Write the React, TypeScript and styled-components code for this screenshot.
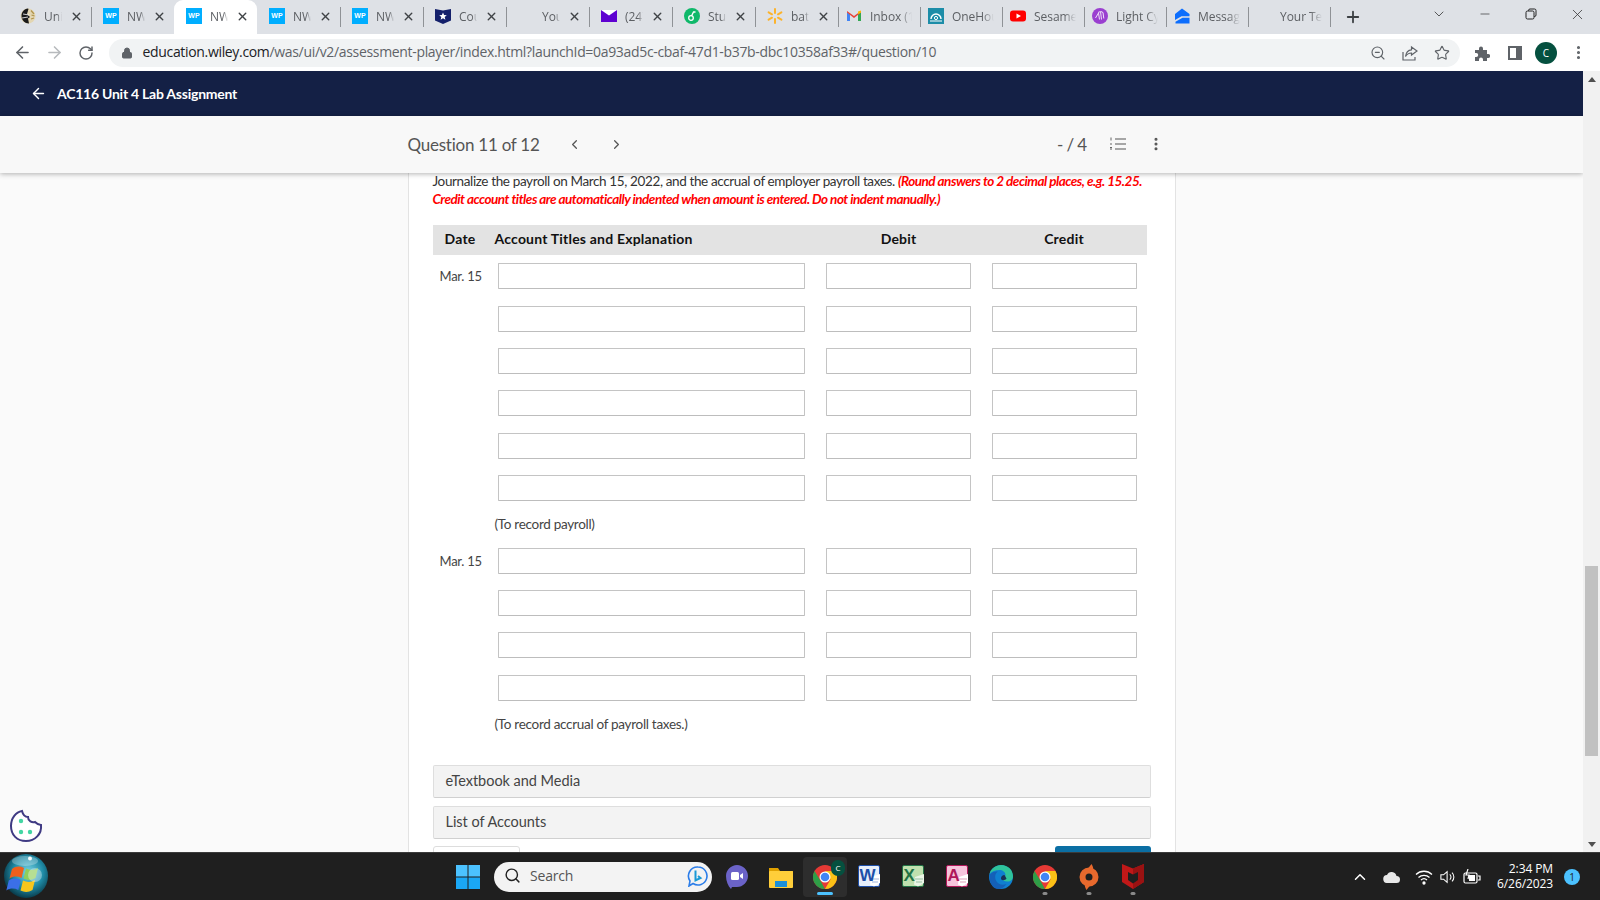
import React from "react";
import styled, { createGlobalStyle } from "styled-components";
import { ArrowLeft, ArrowRight, RotateCw, Lock, ZoomOut, Star, X, Minus, Plus, ChevronDown, ChevronLeft, ChevronRight, EllipsisVertical, ChevronUp, Search } from "lucide-react";

const Global = createGlobalStyle`
  html, body { margin: 0; padding: 0; height: 100%; overflow: hidden; background: #fafafa; }
  * { box-sizing: border-box; }
  #root { width: 1600px; height: 900px; }
`;

const Screen = styled.div`
  width: 1600px; height: 900px; display: flex; flex-direction: column; overflow: hidden; position: relative;
  font-family: Lato, "Open Sans", sans-serif; color: #333;
`;

/* ---------- browser chrome ---------- */
const TabStrip = styled.div`
  height: 34px; flex: none; background: #dee1e6; display: flex; align-items: stretch; padding-left: 8px;
  font-family: "Open Sans", "Noto Sans", sans-serif;
`;
const Tab = styled.div<{ $active?: boolean; $sep?: boolean; $narrow?: boolean }>`
  width: ${(p) => (p.$narrow ? 82 : 83)}px; flex: none; position: relative; display: flex; align-items: center;
  padding: 0 8px 2px ${(p) => (p.$narrow ? 8 : 12)}px; gap: 8px;
  background: ${(p) => (p.$active ? "#fff" : "transparent")};
  border-radius: 9px 9px 0 0;
  &::after {
    content: ""; position: absolute; right: -0.5px; top: 7px; height: 20px; width: 1px;
    background: ${(p) => (p.$sep ? "#8f9296" : "transparent")};
  }
`;
const Fav = styled.span`
  width: 16px; height: 16px; flex: none; display: flex; align-items: center; justify-content: center;
`;
const TabTitle = styled.span`
  flex: 1; min-width: 0; overflow: hidden; white-space: nowrap; font-size: 12px; color: #5c5f63; letter-spacing: -0.05px;
  -webkit-mask-image: linear-gradient(90deg, #000 72%, transparent 100%);
  mask-image: linear-gradient(90deg, #000 72%, transparent 100%);
`;
const TabClose = styled(X)`
  width: 13px; height: 13px; flex: none; color: #3f4246; stroke-width: 2.6;
`;
const WpBadge = styled.span`
  width: 16px; height: 16px; background: #00aeff; color: #fff; font: 700 7px/16px "Liberation Sans", sans-serif; text-align: center;
`;
const NewTab = styled(Plus)`
  width: 18px; height: 18px; color: #3c4043; stroke-width: 2.4; align-self: center; margin-left: 14px; flex: none;
`;
const WindowControls = styled.div`
  margin-left: auto; display: flex; align-items: flex-start; color: #333;
`;
const WinBtn = styled.div<{ $w: number }>`
  width: ${(p) => p.$w}px; height: 28px; display: flex; align-items: center; justify-content: center;
`;

const Toolbar = styled.div`
  height: 37px; flex: none; background: #fff; display: flex; align-items: center; position: relative;
`;
const NavBtn = styled.div<{ $w?: number; $dim?: boolean }>`
  width: ${(p) => p.$w ?? 32}px; height: 28px; flex: none; display: flex; align-items: center; justify-content: center;
  color: ${(p) => (p.$dim ? "#b7babd" : "#5f6368")};
`;
const NavGroup = styled.div`
  display: flex; align-items: center; padding-left: 6px; width: 108.5px; flex: none;
`;
const Omnibox = styled.div`
  width: 1351px; height: 28px; flex: none; border-radius: 14px; background: #f1f3f4; display: flex; align-items: center; padding: 0 2px 0 12px;
`;
const LockIcon = styled(Lock)`
  width: 12px; height: 12px; color: #5f6368; fill: #5f6368; flex: none; margin-right: 10px;
`;
const Url = styled.div`
  flex: 1; font: 14px/18px "Open Sans", sans-serif; letter-spacing: -0.33px; color: #5f6368; white-space: nowrap; padding-bottom: 2px;
  b { font-weight: 400; color: #202124; }
`;
const Avatar = styled.div`
  width: 22px; height: 22px; border-radius: 50%; background: #05503f; color: #fff; font: 10px/22px "Open Sans", sans-serif; text-align: center; flex: none;
`;

/* ---------- page ---------- */
const Viewport = styled.div`
  flex: 1; min-height: 0; display: flex;
`;
const Page = styled.div`
  flex: 1; min-width: 0; display: flex; flex-direction: column; background: #fafafa; overflow: hidden;
`;
const NavyBar = styled.div`
  height: 45px; flex: none; background: #142045; color: #fff; display: flex; align-items: center; padding: 0 0 1px 30px; gap: 10px;
  font-size: 14px; font-weight: 700; letter-spacing: -0.24px;
`;
const QuestionBar = styled.div`
  height: 57px; flex: none; background: #f8f8f8; display: flex; align-items: center; padding: 0 0 1px 407.5px; color: #555;
  box-shadow: 0 1px 5px rgba(0,0,0,.3); position: relative; z-index: 2;
`;
const QuestionLabel = styled.div`
  font-size: 17px; letter-spacing: -0.24px; width: 146px; white-space: nowrap;
`;
const Pager = styled.div`
  width: 42px; display: flex; justify-content: center; color: #555; flex: none;
`;
const Score = styled.div`
  margin-left: 419.5px; font-size: 17px; letter-spacing: -0.6px; width: 52px; white-space: nowrap;
`;
const Kebab = styled.div`
  margin-left: 21px; display: flex; color: #555;
`;

const Sheet = styled.div`
  margin-left: 407.5px; width: 768.5px; flex: 1; min-height: 0; background: #fff;
  border: solid #e3e3e3; border-width: 0 1px; padding: 0 23px 0 24px;
`;
const Instructions = styled.p`
  margin: -1.5px 0 0; font-size: 13.5px; line-height: 18.2px; color: #333; letter-spacing: -0.37px; white-space: nowrap;
  em { color: #f00; font-weight: 700; letter-spacing: -0.5px; }
`;
const TableHead = styled.div`
  margin: 17px 0 8.5px; width: 714px; height: 30px; background: #e3e3e3; display: grid;
  grid-template-columns: 62px 321px 166px 165px; align-items: center; padding-bottom: 2px;
  font-size: 14px; font-weight: 700; color: #111; letter-spacing: 0.2px;
`;
const HeadCell = styled.div<{ $center?: boolean; $pad?: number }>`
  text-align: ${(p) => (p.$center ? "center" : "left")}; padding-left: ${(p) => p.$pad ?? 0}px; white-space: nowrap;
`;
const Rows = styled.div`
  display: flex; flex-direction: column; gap: 16.3px;
`;
const Entry = styled.div`
  display: grid; grid-template-columns: 44px 307px 145px 145px; column-gap: 21px; align-items: center; height: 26px;
`;
const DateCell = styled.div`
  font-size: 13px; padding-left: 7px; white-space: nowrap; letter-spacing: -0.25px; color: #444;
`;
const Field = styled.input`
  width: 100%; height: 26px; border: 1px solid #c4c4c4; border-bottom-color: #bdbdbd; border-radius: 1px; background: #fff; padding: 0; margin: 0; outline: none;
`;
const Note = styled.div<{ $after: number }>`
  padding-left: 62px; font-size: 13.5px; line-height: 18px; letter-spacing: -0.3px; color: #444; margin-top: 14px; margin-bottom: ${(p) => p.$after}px;
`;
const Collapse = styled.div<{ $h: number }>`
  width: 718px; height: ${(p) => p.$h}px; background: #f3f3f3; border: 1px solid #dedede; border-bottom-color: #d0d0d0; border-radius: 2px;
  display: flex; align-items: center; padding: 0 0 1px 12px; font-size: 14.5px; letter-spacing: -0.03px; color: #444; margin-bottom: 8px;
`;
const Actions = styled.div`
  display: flex; justify-content: space-between; width: 718px; margin-top: -1px;
`;
const GhostBtn = styled.div`
  width: 87px; height: 30px; background: #fff; border: 1px solid #ddd; border-radius: 3px;
`;
const PrimaryBtn = styled.div`
  width: 96px; height: 30px; background: #0b6fa4; border-radius: 3px;
`;

const Track = styled.div`
  width: 17px; flex: none; background: #f1f1f1; display: flex; flex-direction: column; align-items: center;
`;
const Arrow = styled.div<{ $up?: boolean }>`
  flex: none; width: 0; height: 0; margin: ${(p) => (p.$up ? "6px 0 5px" : "auto 0 5px")};
  border-left: 4px solid transparent; border-right: 4px solid transparent;
  ${(p) => (p.$up ? "border-bottom: 5px solid #505050;" : "border-top: 5px solid #505050;")}
`;
const Thumb = styled.div`
  width: 13px; height: 190px; background: #c1c1c1; margin-top: 479px; flex: none;
`;
const Cookie = styled.div`
  position: absolute; left: 9px; top: 809px; width: 34px; height: 34px; z-index: 3;
`;

/* ---------- taskbar ---------- */
const Taskbar = styled.div`
  height: 48px; flex: none; background: #1f1f1f; border-top: 1px solid #3b3b3b; display: flex; align-items: center; position: relative;
`;
const Orb = styled.div`
  position: absolute; left: 3px; top: 0; width: 46px; height: 46px;
`;
const Center = styled.div`
  margin-left: 456px; display: flex; align-items: center; flex: none;
`;
const SearchPill = styled.div`
  margin-left: 14px; width: 218px; height: 30px; border-radius: 15px; background: #f3f3f3; display: flex; align-items: center; padding: 0 3px 2px 10px;
  color: #555; font-size: 14px; font-family: "Open Sans", sans-serif; gap: 9px; margin-right: 3px;
`;
const SearchLabel = styled.span`
  flex: 1; letter-spacing: -0.2px;
`;
const TaskIcon = styled.div<{ $active?: boolean; $open?: boolean }>`
  width: 44px; height: 40px; flex: none; display: flex; align-items: center; justify-content: center; position: relative;
  ${(p) => p.$active ? "background: #2d2d2d; border-radius: 4px;" : ""}
  &::after {
    content: ""; position: absolute; left: 50%; bottom: 2px; height: 3px; border-radius: 2px;
    width: ${(p) => (p.$active ? 16 : p.$open ? 5 : 0)}px; transform: translateX(-50%);
    background: ${(p) => (p.$active ? "#4cc2ff" : "#8a8a8a")};
  }
`;
const ChromeBadge = styled.span`
  position: absolute; right: 2px; top: 3px; width: 14px; height: 16px; border-radius: 7px; background: #05503f; color: #fff;
  font: 8px/16px "Open Sans", sans-serif; text-align: center;
`;
const Tray = styled.div`
  margin-left: auto; display: flex; align-items: center; color: #fff; height: 100%; padding-right: 20px;
`;
const TrayIcon = styled.div<{ $w: number }>`
  width: ${(p) => p.$w}px; display: flex; align-items: center; justify-content: center; flex: none;
`;
const Clock = styled.div`
  margin-left: 9px; width: 56px; text-align: right; font: 12px/15.5px "Open Sans", sans-serif; color: #fff; white-space: nowrap;
  letter-spacing: -0.1px; padding-bottom: 1px;
`;
const Notif = styled.div`
  margin-left: 11px; width: 16px; height: 16px; border-radius: 50%; background: #4cc2ff; color: #1f1f1f; font: 10px/16px "Open Sans", sans-serif; text-align: center;
`;

/* ---------- drawings ---------- */
const Globe = () => (
  <svg width="16" height="16" viewBox="0 0 16 16"><circle cx="8" cy="8" r="7.5" fill="#e3d6b2" /><path d="M8 .5C4 1 1.500 4 1.500 8c0 3 1.500 5.500 4.500 7l3 .5-1-5 2-1.500-3-3 1.500-5z" fill="#1a1a1a" /><path d="M3 6l6 1M2 10l6-1" stroke="#fff" strokeWidth=".8" /><path d="M11 2.500l3 3.500M11.500 7l3 1M11 11l3-1" stroke="#b0934a" strokeWidth="1.200" /></svg>
);
const Shield = () => (
  <svg width="16" height="16" viewBox="0 0 16 16"><path d="M0 1l8 1.500L16 1v11.500L8 16 0 12.500z" fill="#14206b" /><path d="M8 4.500l1.100 2.500 2.700.2-2.100 1.800.7 2.700L8 10.200l-2.400 1.500.7-2.700-2.100-1.800 2.700-.2z" fill="#fff" /></svg>
);
const YMail = () => (
  <svg width="16" height="16" viewBox="0 0 16 16"><rect y="2" width="16" height="12" fill="#5f01d1" /><path d="M0 2l8 5.500L16 2z" fill="#fff" /></svg>
);
const StuIcon = () => (
  <svg width="16" height="16" viewBox="0 0 16 16"><circle cx="8" cy="8" r="8" fill="#0fb86a" /><circle cx="7" cy="10" r="2.300" fill="none" stroke="#fff" strokeWidth="1.300" /><path d="M7.500 8l2-4h2" fill="none" stroke="#fff" strokeWidth="1.300" /></svg>
);
const Spark = () => (
  <svg width="16" height="16" viewBox="0 0 16 16" stroke="#fcb32c" strokeWidth="2" strokeLinecap="round"><path d="M8 1v4M8 11v4M1.600 4.300l3.400 2M11 9.700l3.400 2M14.400 4.300L11 6.300M5 9.700l-3.400 2" /></svg>
);
const Gmail = () => (
  <svg width="16" height="16" viewBox="0 0 16 16"><path d="M1 13V4l3 2.200V13z" fill="#4285f4" /><path d="M12 13V6.200L15 4v9z" fill="#34a853" /><path d="M1 4.500V3l7 5 7-5v1.500L8 10z" fill="#ea4335" /><path d="M12 6.200V3.400l3-.9v1.900z" fill="#fbbc04" /></svg>
);
const OneHor = () => (
  <svg width="16" height="16" viewBox="0 0 16 16"><rect width="16" height="16" fill="#1d8da8" /><path d="M3 11a5 5 0 0 1 10 0" fill="none" stroke="#fff" strokeWidth="1.400" /><circle cx="8" cy="10" r="1.600" fill="none" stroke="#fff" /><path d="M2 13h12" stroke="#fff" /></svg>
);
const Yt = () => (
  <svg width="16" height="16" viewBox="0 0 16 16"><rect y="2.500" width="16" height="11" rx="3" fill="#f00" /><path d="M6.500 5.500L11 8l-4.500 2.500z" fill="#fff" /></svg>
);
const LightCy = () => (
  <svg width="16" height="16" viewBox="0 0 16 16"><circle cx="8" cy="8" r="8" fill="#9a3fd0" /><path d="M3.500 10l3-5 1 6.500M6 4.500l2.500-1 1 8M9 3.500l2 1 .8 6" stroke="#f0def9" strokeWidth="1" fill="none" /></svg>
);
const Zillow = () => (
  <svg width="16" height="16" viewBox="0 0 16 16"><path d="M8 .5L15.500 6v2.200H7.500L1 12V6z" fill="#0d6efd" /><path d="M15.500 9.800V15.500H1.500v-1.700L8.500 9.800z" fill="#0d6efd" /></svg>
);
const Share = () => (
  <svg width="16" height="16" viewBox="0 0 16 16" fill="none" stroke="#5f6368" strokeWidth="1.200"><path d="M1 7v8h12v-3" /><path d="M9.500 2l5.500 4-5.500 4V8C7 8 5 9 3.500 11.500 4 7.500 6.500 5 9.500 4.800z" /></svg>
);
const Puzzle = () => (
  <svg width="16" height="16" viewBox="0 0 16 16"><path d="M1 5h4V3.500a2 2 0 0 1 4 0V5h4v4h1.200a2 2 0 0 1 0 4H13v3H9v-1.500a2 2 0 0 0-4 0V16H1v-4h1.200a2 2 0 0 0 0-4H1z" fill="#5f6368" /></svg>
);
const SidePanel = () => (
  <svg width="14" height="14" viewBox="0 0 14 14"><rect x="1" y="1" width="12" height="12" fill="none" stroke="#5f6368" strokeWidth="2" /><rect x="8" y="1" width="5" height="12" fill="#5f6368" /></svg>
);
const Restore = () => (
  <svg width="12" height="12" viewBox="0 0 12 12" fill="none" stroke="#222" strokeWidth="1"><rect x="1" y="3" width="8" height="8" rx="1.500" /><path d="M3.500 3V2.500A1.500 1.500 0 0 1 5 1h4.500A1.500 1.500 0 0 1 11 2.500V7a1.500 1.500 0 0 1-1.500 1.500H9" /></svg>
);
const ListIcon = () => (
  <svg width="18" height="16" viewBox="0 0 18 16" stroke="#555" strokeWidth="1.100" fill="none"><path d="M6 3h11M6 8h11M6 13h11" /><path d="M2 1.500v3M1 8h2M1 13h2M1 11.500h2" strokeWidth=".9" /></svg>
);
const CookieArt = () => (
  <svg width="34" height="34" viewBox="0 0 34 34"><path d="M13 2c1 4 3 6 6 6 0 4 4 6 7 5 2 2 5 3 6 3 1 9-6 16-15 16S2 26 2 17C2 9 7 3 13 2z" fill="#fff" stroke="#3f3a83" strokeWidth="2" /><circle cx="12" cy="12" r="2.200" fill="#43d6a3" /><circle cx="12" cy="23" r="2.200" fill="#43d6a3" /><circle cx="21" cy="23" r="2.200" fill="#43d6a3" /></svg>
);
const OrbArt = () => (
  <svg width="46" height="46" viewBox="0 0 46 46">
    <defs>
      <radialGradient id="orbG" cx="55%" cy="42%" r="62%"><stop offset="0%" stopColor="#7ed8e8" /><stop offset="55%" stopColor="#1f8ba6" /><stop offset="100%" stopColor="#06303e" /></radialGradient>
    </defs>
    <circle cx="23" cy="23" r="22" fill="url(#orbG)" />
    <path d="M9 16c4-3 8-3 12-1l-2.500 10c-4-2-8-2-12 .5z" fill="#ee5f1c" />
    <path d="M23 15.500c4 2 8 2 12-.5l-2.500 10c-4 2.500-8 2.500-12 .5z" fill="#8fce5a" />
    <path d="M5.800 27.500c4-2.500 8-2.500 12-.5l-2.500 10c-4-2-8-2-12 .5z" fill="#3b6fe8" />
    <path d="M20 27.500c4 2 8 2 12-.5l-2.500 10c-4 2.500-8 2.500-12 .5z" fill="#f7c61c" />
    <ellipse cx="22" cy="8" rx="13" ry="5" fill="#fff" opacity=".28" />
    <circle cx="27" cy="5.500" r="2" fill="#fff" opacity=".95" />
    <circle cx="32" cy="22" r="7" fill="#fff" opacity=".35" />
  </svg>
);
const WinLogo = () => (
  <svg width="24" height="24" viewBox="0 0 24 24"><rect width="11.500" height="11.500" fill="#4cc2ff" /><rect x="12.500" width="11.500" height="11.500" fill="#4cc2ff" /><rect y="12.500" width="11.500" height="11.500" fill="#1aa7f5" /><rect x="12.500" y="12.500" width="11.500" height="11.500" fill="#1aa7f5" /></svg>
);
const Bing = () => (
  <svg width="22" height="22" viewBox="0 0 22 22" fill="none"><path d="M11 2a9 9 0 1 1-5 16.500L2 21l1-5A9 9 0 0 1 11 2z" stroke="#2b7de9" strokeWidth="1.600" /><path d="M8.500 5.500v10l5-2.500-2.500-2" stroke="#1b9ad6" strokeWidth="2" /></svg>
);
const Teams = () => (
  <svg width="24" height="26" viewBox="0 0 24 26"><path d="M12 1c6 0 11 5 11 11s-5 11-11 11H7l-1 2c-3-3-5-8-5-13C1 6 6 1 12 1z" fill="#6b63c8" /><rect x="6" y="8" width="8" height="8" rx="1.500" fill="#fff" /><path d="M15 11l3-2v6l-3-2z" fill="#fff" /></svg>
);
const Folder = () => (
  <svg width="24" height="24" viewBox="0 0 24 24"><path d="M0 3h9l2 3h13v3H0z" fill="#e0a100" /><rect y="6" width="24" height="17" rx="1" fill="#ffce3a" /><rect x="6" y="16" width="12" height="6" fill="#1b8fd8" /></svg>
);
const ChromeLogo = ({ s = 24 }: { s?: number }) => (
  <svg width={s} height={s} viewBox="0 0 24 24"><circle cx="12" cy="12" r="12" fill="#e53935" /><path d="M12 24A12 12 0 0 1 1.600 6L7 15l5 9z" fill="#2e9e47" /><path d="M12 24l5.500-9.500L12 6h10.400A12 12 0 0 1 12 24z" fill="#fbc116" /><circle cx="12" cy="12" r="5.500" fill="#fff" /><circle cx="12" cy="12" r="4.300" fill="#4285f4" /></svg>
);
const DocIcon = ({ c, bg, bg2, l }: { c: string; bg: string; bg2: string; l: string }) => (
  <svg width="23" height="23" viewBox="0 0 23 23">
    <rect x=".5" y=".5" width="21" height="21" rx="1.500" fill={bg} stroke={c} strokeWidth="1" />
    <path d="M13 12l9-3v9l-6 3.500-4-2z" fill={bg2} />
    <path d="M13 14h8M14 17h6" stroke={c} strokeWidth=".7" opacity=".6" />
    <text x="1.500" y="15.500" fontSize="17" fontWeight="700" fontFamily="Liberation Sans, sans-serif" fill={c}>{l}</text>
  </svg>
);
const Edge = () => (
  <svg width="24" height="24" viewBox="0 0 24 24">
    <circle cx="12" cy="12" r="12" fill="#0f7fd0" />
    <path d="M.5 9C2 3.500 7 0 12 0c7 0 12 5 12 11.500 0 3-2.500 5-5.500 5-3.500 0-5.500-1.500-5.500-3 2 0 3.500-1.500 3.500-3.500 0-3-3-5-6-5C6.500 5 2.500 6.500.5 9z" fill="#2fc39a" />
    <path d="M.5 10C3 7 6 6 9 6.500 6 8.500 5.500 12 7 15.500c1.500 3.500 6 5.500 10.500 3.500-2 3-5 5-8.500 5C4 24 0 18 .5 10z" fill="#1460b8" />
    <path d="M12 13.500c0-2 1.500-3.500 3.500-3.500l2 3.500c-1 2-5.500 2.500-5.500 0z" fill="#1a2f55" />
  </svg>
);
const Origin = () => (
  <svg width="20" height="26" viewBox="0 0 20 26"><circle cx="10" cy="13" r="6.500" fill="none" stroke="#e8692d" strokeWidth="6" /><path d="M12.500 0c1.500 2.500 2 4 1.500 6L9 4.500zM7.500 26C6 23.500 5.500 22 6 20l5 1.500z" fill="#e8692d" /></svg>
);
const McAfee = () => (
  <svg width="22" height="25" viewBox="0 0 22 25"><path d="M0 0l11 4.500L22 0v18l-11 7-11-7z" fill="#c01818" /><path d="M11 4.500L22 0v18l-11 7z" fill="#9a1212" /><path d="M6 8l5 2.500L16 8v8l-5 3.500L6 16z" fill="#1f1f1f" /></svg>
);
const CloudIco = () => (
  <svg width="18" height="12" viewBox="0 0 18 12"><path d="M4.500 12a4 4 0 0 1-.5-8 5 5 0 0 1 9.500 1 3.500 3.500 0 0 1 0 7z" fill="#e8e8e8" /></svg>
);
const WifiIco = () => (
  <svg width="18" height="16" viewBox="0 0 18 16" fill="none" stroke="#fff" strokeWidth="1.300"><path d="M1 5.500a11.500 11.500 0 0 1 16 0M3.500 8.500a8 8 0 0 1 11 0M6 11a4.500 4.500 0 0 1 6 0" /><circle cx="9" cy="14" r="1" fill="#fff" /></svg>
);
const SpeakerIco = () => (
  <svg width="18" height="16" viewBox="0 0 18 16" fill="none" stroke="#fff" strokeWidth="1.200"><path d="M1 5.500h3L8 2v12l-4-3.500H1z" /><path d="M11 5a4 4 0 0 1 0 6M13.500 3a7 7 0 0 1 0 10" /></svg>
);
const BatteryIco = () => (
  <svg width="18" height="16" viewBox="0 0 18 16" fill="none" stroke="#fff" strokeWidth="1.200"><rect x="1" y="4" width="13" height="10" rx="1.500" /><path d="M15 7h2v4h-2" /><rect x="6" y="6" width="6" height="6" fill="#fff" stroke="none" /><path d="M5 0L3 6h3l-1 4" /></svg>
);

const tabs = [
  { t: "Unit 4", i: <Globe />, sep: true },
  { t: "NWP", i: <WpBadge>WP</WpBadge> },
  { t: "NWP", i: <WpBadge>WP</WpBadge>, active: true },
  { t: "NWP", i: <WpBadge>WP</WpBadge>, sep: true },
  { t: "NWP", i: <WpBadge>WP</WpBadge>, sep: true },
  { t: "Course", i: <Shield />, sep: true },
  { t: "Your", i: null, sep: true },
  { t: "(247)", i: <YMail />, sep: true },
  { t: "Study", i: <StuIcon />, sep: true },
  { t: "battery", i: <Spark />, sep: true },
  { t: "Inbox (1", i: <Gmail />, sep: true, narrow: true },
  { t: "OneHour", i: <OneHor />, sep: true, narrow: true },
  { t: "Sesame", i: <Yt />, sep: true, narrow: true },
  { t: "Light Cy", i: <LightCy />, sep: true, narrow: true },
  { t: "Message", i: <Zillow />, sep: true, narrow: true },
  { t: "Your Tex", i: null, sep: true, narrow: true },
];

const EntryRow = ({ date }: { date?: string }) => (
  <Entry>
    <DateCell>{date}</DateCell>
    <Field aria-label="Account" />
    <Field aria-label="Debit" />
    <Field aria-label="Credit" />
  </Entry>
);

export default function App() {
  return (
    <Screen>
      <Global />
      <TabStrip>
        {tabs.map((tab, n) => (
          <Tab key={n} $active={tab.active} $sep={tab.sep} $narrow={tab.narrow}>
            <Fav>{tab.i}</Fav>
            <TabTitle>{tab.t}</TabTitle>
            {!tab.narrow && <TabClose />}
          </Tab>
        ))}
        <NewTab />
        <WindowControls>
          <WinBtn $w={46}><ChevronDown size={16} strokeWidth={1.2} /></WinBtn>
          <WinBtn $w={46}><Minus size={14} strokeWidth={1.2} /></WinBtn>
          <WinBtn $w={46}><Restore /></WinBtn>
          <WinBtn $w={46}><X size={17} strokeWidth={1.1} /></WinBtn>
        </WindowControls>
      </TabStrip>

      <Toolbar>
        <NavGroup>
          <NavBtn><ArrowLeft size={19} strokeWidth={2} /></NavBtn>
          <NavBtn $dim><ArrowRight size={19} strokeWidth={2} /></NavBtn>
          <NavBtn><RotateCw size={16} strokeWidth={2.2} /></NavBtn>
        </NavGroup>
        <Omnibox>
          <LockIcon />
          <Url><b>education.wiley.com</b>/was/ui/v2/assessment-player/index.html?launchId=0a93ad5c-cbaf-47d1-b37b-dbc10358af33#/question/10</Url>
          <NavBtn><ZoomOut size={16} strokeWidth={1.7} /></NavBtn>
          <NavBtn><Share /></NavBtn>
          <NavBtn><Star size={16} strokeWidth={1.7} /></NavBtn>
        </Omnibox>
        <NavBtn $w={44}><Puzzle /></NavBtn>
        <NavBtn $w={22}><SidePanel /></NavBtn>
        <NavBtn $w={41}><Avatar>C</Avatar></NavBtn>
        <NavBtn $w={24}><EllipsisVertical size={17} strokeWidth={2.4} /></NavBtn>
      </Toolbar>

      <Viewport>
        <Page>
          <NavyBar>
            <ArrowLeft size={17} strokeWidth={2} />
            AC116 Unit 4 Lab Assignment
          </NavyBar>
          <QuestionBar>
            <QuestionLabel>Question 11 of 12</QuestionLabel>
            <Pager><ChevronLeft size={15} strokeWidth={2} /></Pager>
            <Pager><ChevronRight size={15} strokeWidth={2} /></Pager>
            <Score>- / 4</Score>
            <ListIcon />
            <Kebab><EllipsisVertical size={16} strokeWidth={2.6} /></Kebab>
          </QuestionBar>
          <Sheet>
            <Instructions>
              Journalize the payroll on March 15, 2022, and the accrual of employer payroll taxes. <em>(Round answers to 2 decimal places, e.g. 15.25.</em>
              <br />
              <em>Credit account titles are automatically indented when amount is entered. Do not indent manually.)</em>
            </Instructions>
            <TableHead>
              <HeadCell $pad={12}>Date</HeadCell>
              <HeadCell>Account Titles and Explanation</HeadCell>
              <HeadCell $center>Debit</HeadCell>
              <HeadCell $center>Credit</HeadCell>
            </TableHead>
            <Rows>
              <EntryRow date="Mar. 15" />
              <EntryRow />
              <EntryRow />
              <EntryRow />
              <EntryRow />
              <EntryRow />
            </Rows>
            <Note $after={15}>(To record payroll)</Note>
            <Rows>
              <EntryRow date="Mar. 15" />
              <EntryRow />
              <EntryRow />
              <EntryRow />
            </Rows>
            <Note $after={32}>(To record accrual of payroll taxes.)</Note>
            <Collapse $h={33}>eTextbook and Media</Collapse>
            <Collapse $h={33}>List of Accounts</Collapse>
            <Actions>
              <GhostBtn />
              <PrimaryBtn />
            </Actions>
          </Sheet>
        </Page>
        <Track>
          <Arrow $up />
          <Thumb />
          <Arrow />
        </Track>
      </Viewport>
      <Cookie><CookieArt /></Cookie>

      <Taskbar>
        <Orb><OrbArt /></Orb>
        <Center>
          <WinLogo />
          <SearchPill>
            <Search size={17} color="#222" strokeWidth={2} />
            <SearchLabel>Search</SearchLabel>
            <Bing />
          </SearchPill>
          <TaskIcon><Teams /></TaskIcon>
          <TaskIcon><Folder /></TaskIcon>
          <TaskIcon $active><ChromeLogo /><ChromeBadge>C</ChromeBadge></TaskIcon>
          <TaskIcon><DocIcon c="#1d4ea8" bg="#e6eefa" bg2="#fff" l="W" /></TaskIcon>
          <TaskIcon><DocIcon c="#217346" bg="#bfe0ae" bg2="#eaf5e6" l="X" /></TaskIcon>
          <TaskIcon><DocIcon c="#b0175a" bg="#f6c4dc" bg2="#fff" l="A" /></TaskIcon>
          <TaskIcon><Edge /></TaskIcon>
          <TaskIcon $open><ChromeLogo /></TaskIcon>
          <TaskIcon $open><Origin /></TaskIcon>
          <TaskIcon $open><McAfee /></TaskIcon>
        </Center>
        <Tray>
          <TrayIcon $w={32}><ChevronUp size={18} strokeWidth={2} /></TrayIcon>
          <TrayIcon $w={32}><CloudIco /></TrayIcon>
          <TrayIcon $w={32}><WifiIco /></TrayIcon>
          <TrayIcon $w={16}><SpeakerIco /></TrayIcon>
          <TrayIcon $w={32}><BatteryIco /></TrayIcon>
          <Clock>2:34 PM<br />6/26/2023</Clock>
          <Notif>1</Notif>
        </Tray>
      </Taskbar>
    </Screen>
  );
}
